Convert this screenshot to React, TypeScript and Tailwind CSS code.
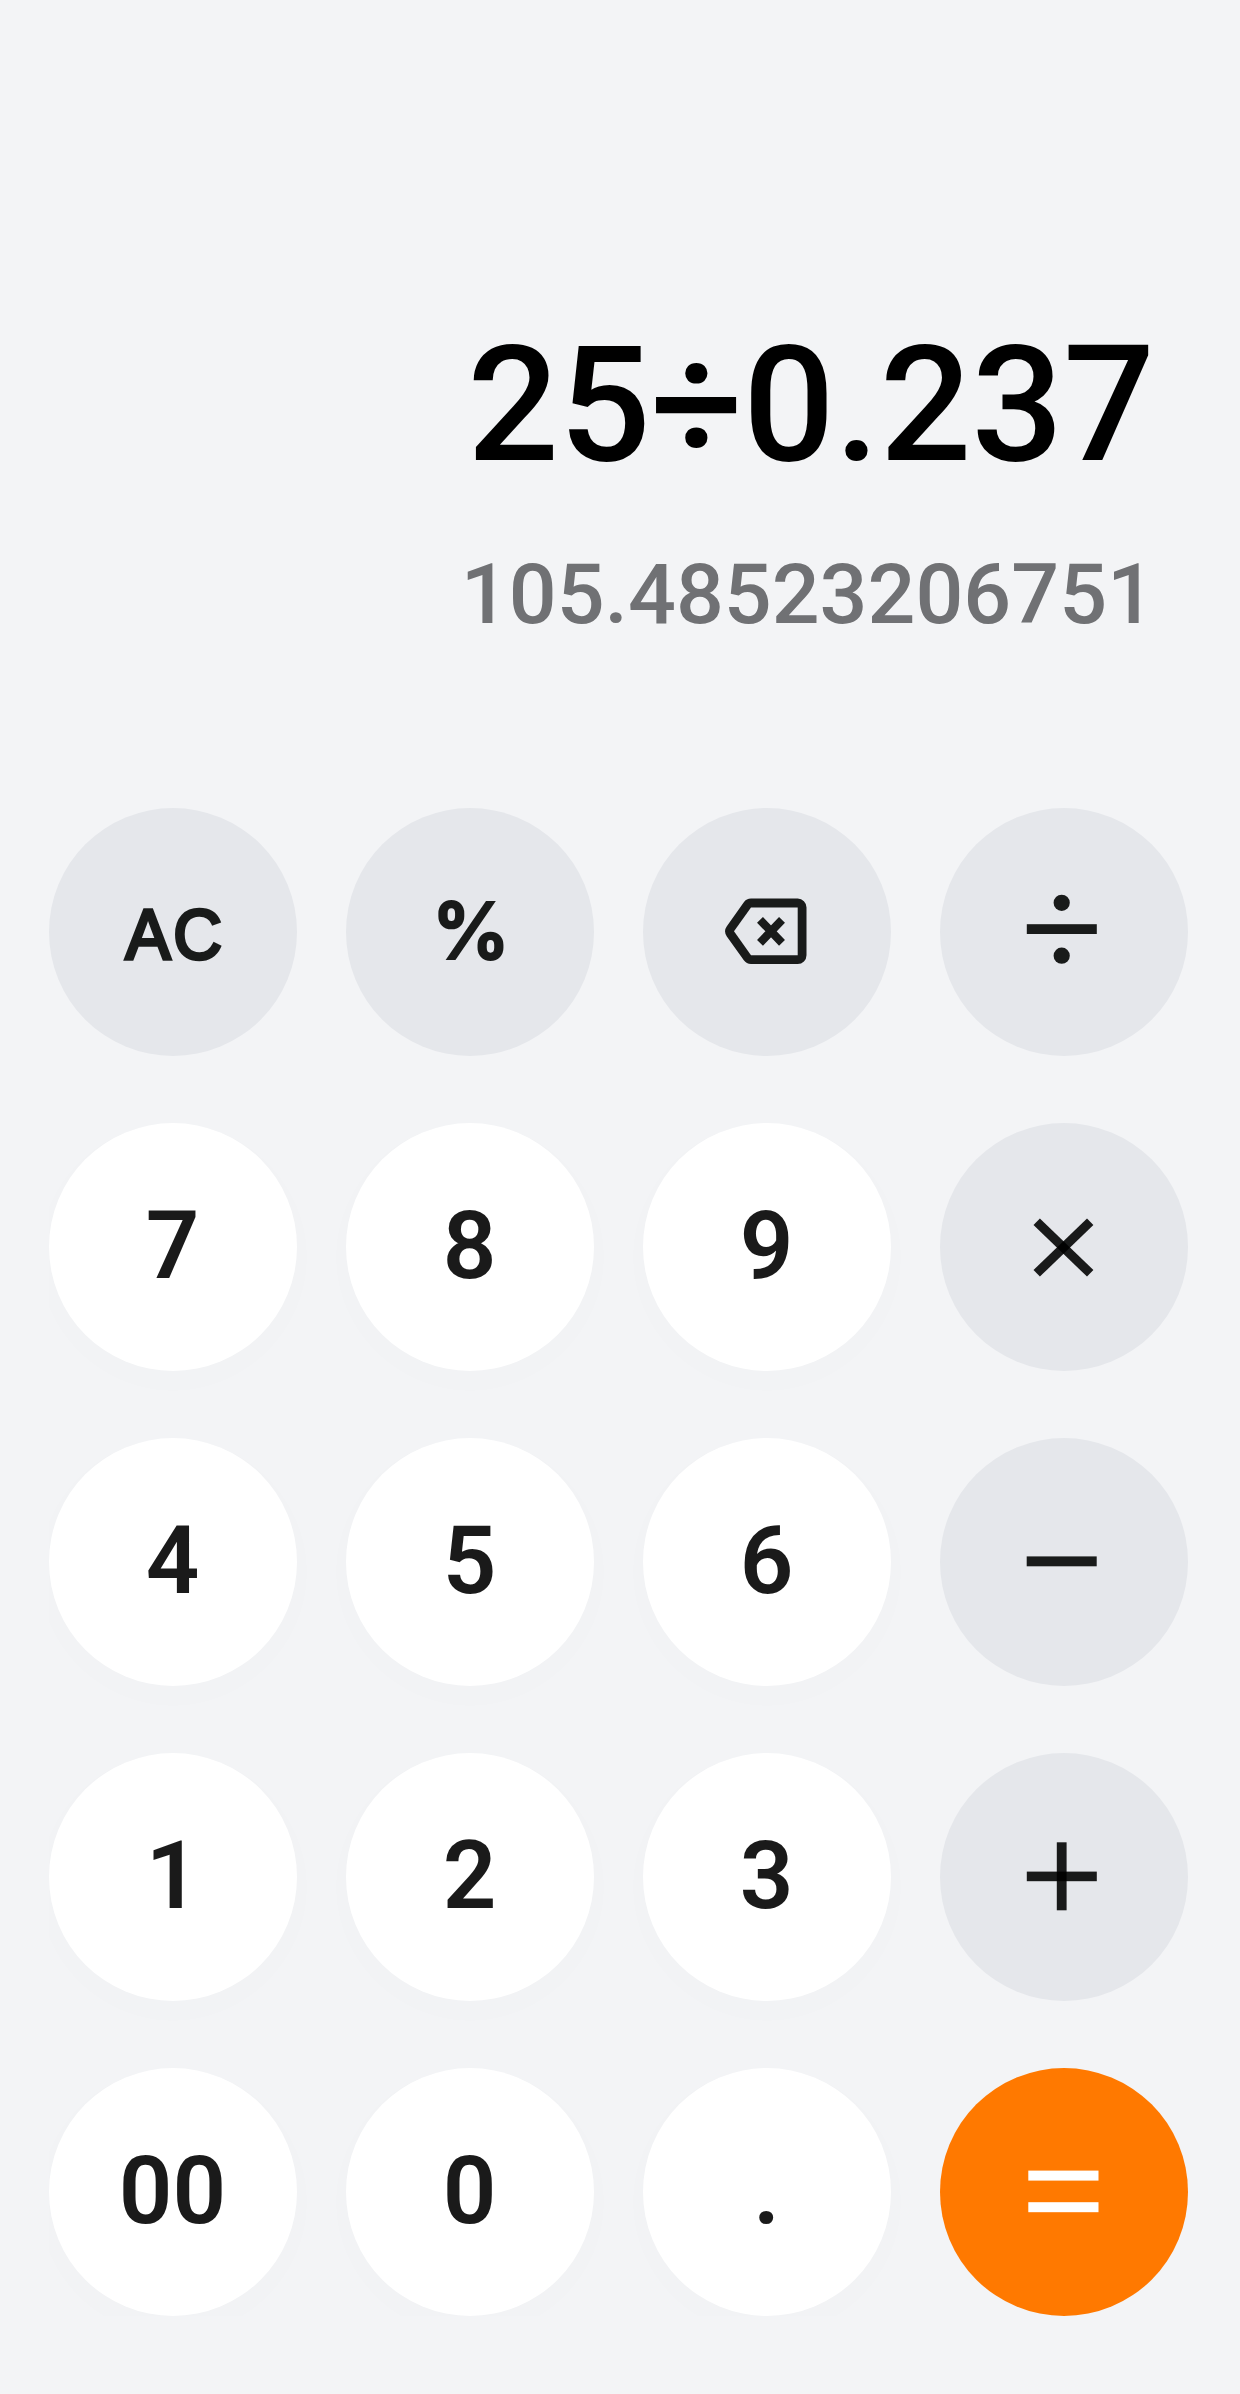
import React from 'react';
import type { ReactNode } from 'react';

type KeyVariant = 'number' | 'function' | 'equals';

interface CalcKey {
  id: string;
  variant: KeyVariant;
  content: ReactNode;
}

const INK = '#191b1a';

function NumberLabel({ children }: { children: ReactNode }) {
  return (
    <span className="pr-px pb-[3px] font-['Roboto',sans-serif] text-[94px] leading-none font-semibold text-[#1a1a1a]">
      {children}
    </span>
  );
}

function BackspaceIcon() {
  const body = '108,99.4 154.7,99.4 154.7,147.2 108,147.2 91,123.3';
  return (
    <svg viewBox="0 0 248 248" className="size-full">
      <polygon points={body} fill={INK} stroke={INK} strokeWidth="17.6" strokeLinejoin="round" />
      <polygon points={body} fill="#e5e7eb" />
      <path d="M117 111.8 139 134.8M139 111.8 117 134.8" stroke={INK} strokeWidth="8.2" />
    </svg>
  );
}

function DivideIcon() {
  return (
    <svg viewBox="0 0 248 248" className="size-full" fill={INK}>
      <circle cx="121.7" cy="94.8" r="8.1" />
      <rect x="86.8" y="116.2" width="70" height="9.8" />
      <circle cx="121.7" cy="147.7" r="8.1" />
    </svg>
  );
}

// strokes are translucent, so the crossing point comes out darker
function MultiplyIcon() {
  return (
    <svg viewBox="0 0 248 248" className="size-full" stroke="#000" strokeOpacity="0.89" strokeWidth="9.2">
      <path d="M96.7 98.7 150.2 150.3" />
      <path d="M150.2 98.7 96.7 150.3" />
    </svg>
  );
}

function MinusIcon() {
  return (
    <svg viewBox="0 0 248 248" className="size-full" fill={INK}>
      <rect x="86.7" y="118.4" width="70" height="9.9" />
    </svg>
  );
}

function PlusIcon() {
  return (
    <svg viewBox="0 0 248 248" className="size-full" fill="#000" fillOpacity="0.89">
      <rect x="86.8" y="118.6" width="70" height="9.6" />
      <rect x="116.8" y="89.3" width="9.8" height="68" />
    </svg>
  );
}

function EqualsIcon() {
  return (
    <svg viewBox="0 0 248 248" className="size-full" fill="#fff">
      <rect x="88.3" y="102.6" width="70.2" height="10" />
      <rect x="88.3" y="134.2" width="70.2" height="10" />
    </svg>
  );
}

function numberKey(label: string): CalcKey {
  return { id: label, variant: 'number', content: <NumberLabel>{label}</NumberLabel> };
}

const keys: CalcKey[] = [
  {
    id: 'clear',
    variant: 'function',
    content: (
      <span className="scale-x-95 pt-[4px] pl-[5px] font-['Liberation_Sans',sans-serif] text-[71px] leading-none tracking-[3px] text-[#191b1a] [-webkit-text-stroke:3.5px_#191b1a]">
        AC
      </span>
    ),
  },
  {
    id: 'percent',
    variant: 'function',
    content: (
      <span className="pb-[3px] pl-[2px] font-['Inter',sans-serif] text-[78px] leading-none font-semibold text-[#191b1a] [-webkit-text-stroke:2px_#191b1a]">
        %
      </span>
    ),
  },
  { id: 'backspace', variant: 'function', content: <BackspaceIcon /> },
  { id: 'divide', variant: 'function', content: <DivideIcon /> },
  numberKey('7'),
  numberKey('8'),
  numberKey('9'),
  { id: 'multiply', variant: 'function', content: <MultiplyIcon /> },
  numberKey('4'),
  numberKey('5'),
  numberKey('6'),
  { id: 'minus', variant: 'function', content: <MinusIcon /> },
  numberKey('1'),
  numberKey('2'),
  numberKey('3'),
  { id: 'plus', variant: 'function', content: <PlusIcon /> },
  numberKey('00'),
  numberKey('0'),
  numberKey('.'),
  { id: 'equals', variant: 'equals', content: <EqualsIcon /> },
];

const variantClasses: Record<KeyVariant, string> = {
  number: 'bg-white shadow-[0_10px_60px_rgba(0,0,0,0.01)]',
  function: 'bg-[#e5e7eb]',
  equals: 'bg-[#ff7900]',
};

export default function App() {
  return (
    <div className="flex h-[2394px] w-[1240px] flex-col bg-[#f3f4f6]">
      <div className="flex h-[808px] flex-col items-end pt-[324px] pr-[85px] font-['Roboto',sans-serif] font-medium whitespace-nowrap">
        <div className="text-[161.5px] leading-none text-black">25÷0.237</div>
        <div className="mt-[67px] text-[84.3px] leading-none text-[#707174]">105.48523206751</div>
      </div>

      <div className="ml-[49px] grid w-[1139px] grid-cols-4 gap-x-[49px] gap-y-[67px] overflow-clip">
        {keys.map((key) => (
          <button
            key={key.id}
            type="button"
            className={`flex size-[248px] items-center justify-center rounded-full ${variantClasses[key.variant]}`}
          >
            {key.content}
          </button>
        ))}
      </div>
    </div>
  );
}
